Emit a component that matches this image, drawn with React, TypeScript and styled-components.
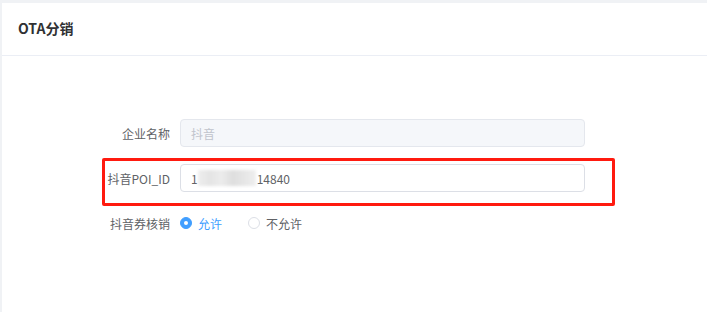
import React from "react";
import styled, { createGlobalStyle } from "styled-components";

const Global = createGlobalStyle`
  html, body { margin: 0; padding: 0; background: #f0f2f5; }
  body { font-family: "Noto Sans CJK SC", "Noto Sans", sans-serif; }
  * { box-sizing: border-box; }
`;

const Page = styled.div`
  padding: 3px 0 0 2px;
  height: 312px;
`;

const Card = styled.div`
  background: #fff;
  height: 309px;
`;

const Header = styled.div`
  height: 53px;
  border-bottom: 1px solid #ebeef5;
  display: flex;
  align-items: center;
  padding-left: 16px;
`;

const Title = styled.div`
  font-size: 14px;
  font-weight: 700;
  color: #303133;
  padding-bottom: 2px;
`;

const Form = styled.div`
  padding: 63px 0 0 98px;
  display: flex;
  flex-direction: column;
  gap: 17px;
`;

const Row = styled.div<{ $highlight?: boolean }>`
  position: relative;
  display: flex;
  align-items: center;
  height: 28px;
  ${(p) =>
    p.$highlight &&
    `
    &::after {
      content: "";
      position: absolute;
      left: 2px;
      top: -6px;
      width: 507px;
      height: 42px;
      border: 3px solid #ff1a0f;
      border-radius: 2px;
      pointer-events: none;
    }
  `}
`;

const Label = styled.div`
  width: 80px;
  padding-right: 10px;
  text-align: right;
  font-size: 12px;
  color: #606266;
  white-space: nowrap;
`;

const Input = styled.div<{ $disabled?: boolean }>`
  width: 405px;
  height: 28px;
  border: 1px solid ${(p) => (p.$disabled ? "#e4e7ed" : "#dcdfe6")};
  background: ${(p) => (p.$disabled ? "#f5f7fa" : "#fff")};
  color: ${(p) => (p.$disabled ? "#c0c4cc" : "#606266")};
  border-radius: 4px;
  font-size: 12px;
  display: flex;
  align-items: center;
  padding-left: 10px;
`;

const Blurred = styled.span`
  display: inline-block;
  width: 58px;
  height: 16px;
  margin: 0 1px 0 0;
  background: linear-gradient(
    90deg,
    #eeeeee 0%,
    #e4e4e4 20%,
    #ececec 40%,
    #dedede 60%,
    #e6e6e6 80%,
    #efefef 100%
  );
  filter: blur(1.5px);
`;

const Radios = styled.div`
  display: flex;
  align-items: center;
`;

const RadioItem = styled.label<{ $checked?: boolean }>`
  display: flex;
  align-items: center;
  font-size: 12px;
  color: ${(p) => (p.$checked ? "#409eff" : "#606266")};
  margin-right: 26px;
`;

const Dot = styled.span<{ $checked?: boolean }>`
  width: 12px;
  height: 12px;
  border-radius: 50%;
  margin-right: 6px;
  border: 1px solid ${(p) => (p.$checked ? "#409eff" : "#dcdfe6")};
  background: ${(p) => (p.$checked ? "#409eff" : "#fff")};
  display: flex;
  align-items: center;
  justify-content: center;
  &::after {
    content: "";
    width: 4px;
    height: 4px;
    border-radius: 50%;
    background: #fff;
    display: ${(p) => (p.$checked ? "block" : "none")};
  }
`;

export default function App() {
  return (
    <>
      <Global />
      <Page>
        <Card>
          <Header>
            <Title>OTA分销</Title>
          </Header>
          <Form>
            <Row>
              <Label>企业名称</Label>
              <Input $disabled>抖音</Input>
            </Row>
            <Row $highlight>
              <Label>抖音POI_ID</Label>
              <Input>
                1<Blurred />14840
              </Input>
            </Row>
            <Row>
              <Label>抖音券核销</Label>
              <Radios>
                <RadioItem $checked>
                  <Dot $checked />
                  允许
                </RadioItem>
                <RadioItem>
                  <Dot />
                  不允许
                </RadioItem>
              </Radios>
            </Row>
          </Form>
        </Card>
      </Page>
    </>
  );
}
